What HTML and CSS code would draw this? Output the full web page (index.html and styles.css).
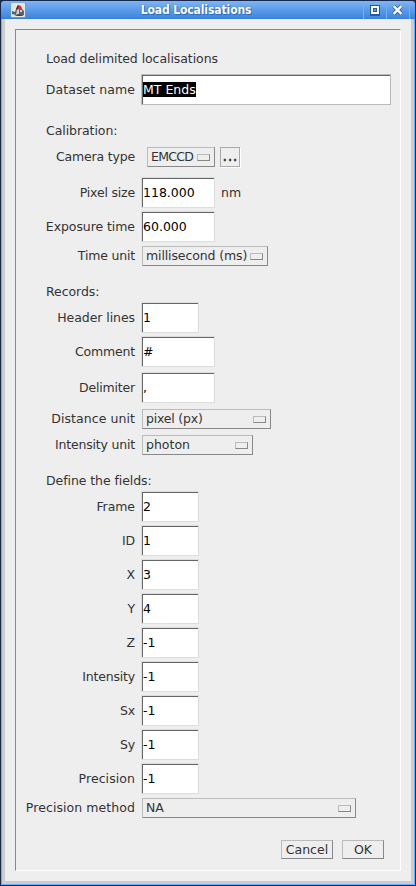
FILE: index.html
```
<!DOCTYPE html>
<html lang="en">
<head>
<meta charset="utf-8">
<title>Load Localisations</title>
<link rel="stylesheet" href="styles.css">
</head>
<body>
<div class="window">
  <header class="titlebar">
    <svg class="app-icon" width="15" height="15" viewBox="0 0 15 15">
      <rect width="15" height="15" rx="1" fill="#8e9095"/><rect width="14" height="14" rx="1" fill="#e6e6e4"/>
      <path d="M7 2l3 1 1 3 2 2v4l-2 1H6l-1-1-4-1V8l3 1 1-3z" fill="#5c6163"/>
      <path d="M6 7l2-1v5l-3 1zM9 7h2v2H9z" fill="#cfd3d3"/>
      <path d="M3 12.500l4-1 5 1z" fill="#222"/><path d="M5 6l2-4 1 3z" fill="#222"/><circle cx="8.500" cy="4.500" r="1.700" fill="#e3262b"/>
    </svg>
    <h1 class="title">Load Localisations</h1>
    <div class="controls">
      <svg class="control" width="23" height="18" viewBox="0 0 23 18" shape-rendering="crispEdges"><path d="M6 4h11v11H6z" fill="#28599f"/><path d="M7 5h9v8H7z" fill="#fff"/><path d="M9 7h5v4H9z" fill="#28599f"/><path d="M10 8h3v2h-3z" fill="#5a9bea"/></svg>
      <svg class="control" width="23" height="18" viewBox="0 0 23 18"><path d="M7 5l8 8M15 5l-8 8" stroke="#28599f" stroke-width="4"/><path d="M7 5l8 8M15 5l-8 8" stroke="#fff" stroke-width="2.500"/></svg>
    </div>
  </header>
  <main class="panel">
    <p class="heading intro">Load delimited localisations</p>
    <div class="row dataset"><span class="label loose">Dataset name</span><div class="field name"><span class="selected">MT Ends</span></div></div>

    <p class="heading calibration">Calibration:</p>
    <div class="row choice-row camera"><span class="label tight">Camera type</span><div class="choice emccd"><span>EMCCD</span><i class="knob"></i></div><div class="more">...</div></div>
    <div class="row pixel"><span class="label tight">Pixel size</span><div class="field medium">118.000</div><span class="unit">nm</span></div>
    <div class="row"><span class="label">Exposure time</span><div class="field medium">60.000</div></div>
    <div class="row choice-row time"><span class="label tight">Time unit</span><div class="choice ms"><span>millisecond (ms)</span><i class="knob"></i></div></div>

    <p class="heading records">Records:</p>
    <div class="row header-lines"><span class="label">Header lines</span><div class="field">1</div></div>
    <div class="row"><span class="label tight">Comment</span><div class="field medium">#</div></div>
    <div class="row delimiter"><span class="label tight">Delimiter</span><div class="field medium">,</div></div>
    <div class="row choice-row distance"><span class="label loose">Distance unit</span><div class="choice px"><span>pixel (px)</span><i class="knob"></i></div></div>
    <div class="row choice-row intensity-unit"><span class="label tight">Intensity unit</span><div class="choice photon"><span>photon</span><i class="knob"></i></div></div>

    <p class="heading fields">Define the fields:</p>
    <div class="row frame"><span class="label">Frame</span><div class="field">2</div></div>
    <div class="row"><span class="label tight">ID</span><div class="field">1</div></div>
    <div class="row"><span class="label">X</span><div class="field">3</div></div>
    <div class="row"><span class="label">Y</span><div class="field">4</div></div>
    <div class="row"><span class="label">Z</span><div class="field">-1</div></div>
    <div class="row"><span class="label tight">Intensity</span><div class="field">-1</div></div>
    <div class="row"><span class="label tight">Sx</span><div class="field">-1</div></div>
    <div class="row"><span class="label tight">Sy</span><div class="field">-1</div></div>
    <div class="row"><span class="label loose">Precision</span><div class="field">-1</div></div>
    <div class="row choice-row method-row"><span class="label loose">Precision method</span><div class="choice method"><span>NA</span><i class="knob"></i></div></div>

    <div class="buttons"><div class="button cancel">Cancel</div><div class="button ok">OK</div></div>
  </main>
</div>
</body>
</html>
```

FILE: styles.css
```
*, *::before { box-sizing: border-box; }
body { margin: 0; background: #1b2d4d; }
p, h1 { margin: 0; }

.window {
  width: 416px;
  height: 886px;
  padding: 1px;
  background: #16294a;
  font: 12.5px/18px "DejaVu Sans", sans-serif;
  color: #333;
  display: flex;
  flex-direction: column;
}
.titlebar {
  height: 18px;
  flex: none;
  display: flex;
  align-items: center;
  border-radius: 3px 3px 0 0;
  background: linear-gradient(#82b4f2, #5a9bea 50%, #3b87e0 94%, #2f73cb);
}
.app-icon { margin: 1px 0 0 10px; }
.title {
  width: 240px;
  margin-left: 50px;
  text-align: center;
  font: bold 12px/18px "DejaVu Sans Condensed", "DejaVu Sans", sans-serif;
  letter-spacing: -0.1px;
  color: #fff;
  text-shadow: 0 0 1px #235ba5, 1px 1px 0 #2f6fbe;
}
.controls { display: flex; margin-left: auto; margin-right: 5px; border-right: 1px solid #75adf0; }
.control { border-left: 1px solid #75adf0; }

.panel {
  flex: 1;
  position: relative;
  border: 1px solid #66b0ff;
  border-top: 0;
  padding: 10px 13px 13px;
  background: #eee;
  box-shadow: inset 3px 0 #ccc, inset -3px 0 #ccc, inset 0 -3px #ccc;
}
.panel::before {
  content: "";
  position: absolute;
  left: 13px;
  top: 10px;
  width: 386px;
  height: 842px;
  border: 1px solid;
  border-color: #888 #fff #fff #888;
}
.heading { height: 18px; padding-left: 31px; white-space: nowrap; letter-spacing: -0.07px; }
.intro { margin-top: 21px; }
.dataset { margin-top: 6px; }
.calibration { margin-top: 17px; }
.camera { margin-top: 7px; }
.pixel { margin-top: 10px; }
.time { margin-top: 4px; }
.records { margin-top: 17px; }
.header-lines { margin-top: 1px; }
.delimiter { margin-top: 5px; }
.distance { margin-top: 6px; }
.intensity-unit { margin-top: 6px; }
.fields { margin-top: 17px; }
.frame { margin-top: 1px; }
.method-row { margin-top: 4px; }

.row { display: flex; height: 31px; align-items: center; margin-bottom: 3px; }
.label {
  width: 120px;
  margin-right: 6px;
  display: flex;
  justify-content: flex-end;
  white-space: nowrap;
  flex: none;
  letter-spacing: -0.07px;
}
.tight { letter-spacing: -0.18px; }
.loose { letter-spacing: 0.07px; }
.unit { margin-left: 6px; }

.field {
  width: 58px;
  height: 31px;
  padding-left: 1px;
  border: 1px solid #ddd;
  background: #fff;
  box-shadow: inset 1px 1px #666;
  line-height: 29px;
  color: #000;
}
.medium { width: 74px; }
.name { width: 250px; border-color: #bbb; }
.selected { display: inline-block; line-height: 15px; height: 15px; background: #000; color: #fff; }

.choice-row { height: 20px; margin-bottom: 0; }
.choice {
  height: 20px;
  margin-left: 1px;
  padding: 0 4px 0 3px;
  display: flex;
  align-items: center;
  justify-content: space-between;
  border: 1px solid;
  border-color: #bbb #888 #888 #bbb;
}
.knob { width: 13px; height: 7px; border: 1px solid; border-color: #bbb #888 #888 #bbb; }
.emccd { width: 68px; margin-left: 6px; letter-spacing: -0.7px; }
.ms { width: 126px; letter-spacing: -0.12px; }
.px { width: 129px; letter-spacing: -0.2px; }
.photon { width: 111px; }
.method { width: 214px; }
.more {
  width: 20px;
  height: 20px;
  margin: -1px 0 0 5px;
  border: 1px solid #aaa;
  box-shadow: 1px 1px #fff;
  text-align: center;
  font-size: 16px;
  line-height: 16px;
  -webkit-text-stroke: 0.3px #333;
}

.buttons { display: flex; gap: 9px; margin: 22px 0 0 266px; }
.button { height: 19px; border: 1px solid; border-color: #bbb #888 #888 #bbb; text-align: center; line-height: 17px; }
.cancel { width: 52px; }
.ok { width: 42px; }
```
